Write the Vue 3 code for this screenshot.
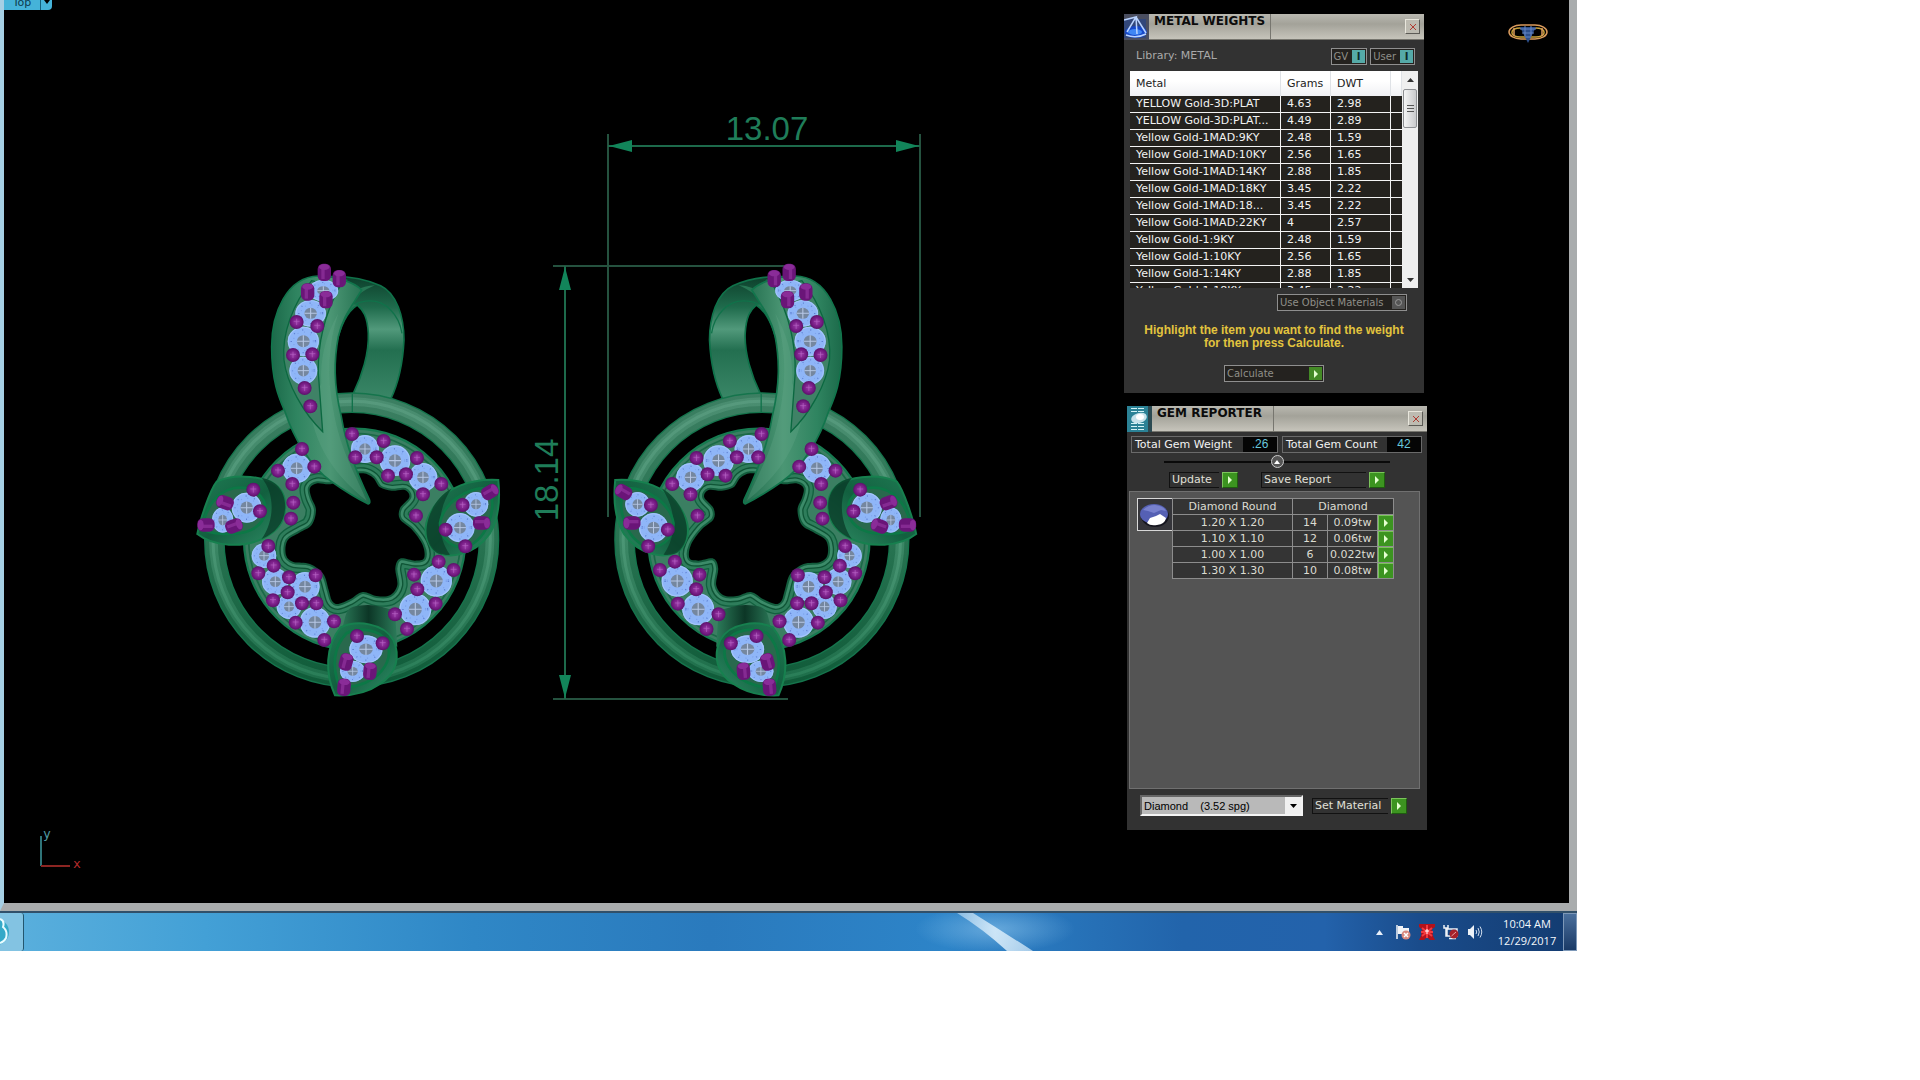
<template>
  <div class="desktop">
    <main class="viewport">
      <svg class="scene" viewBox="4 0 1565 903" role="img" aria-label="Top view of the earring pair">
        <defs>
          <linearGradient id="leafFill" x1="0" y1="0" x2="1" y2="0">
            <stop offset="0" stop-color="#1c6a4a" />
            <stop offset="0.25" stop-color="#2f8460" />
            <stop offset="0.6" stop-color="#4b9674" />
            <stop offset="1" stop-color="#1f6b4b" />
          </linearGradient>
          <linearGradient id="bandFill" x1="0" y1="0" x2="0" y2="1">
            <stop offset="0" stop-color="#0d3f2b" />
            <stop offset="0.25" stop-color="#1f6b4c" />
            <stop offset="0.43" stop-color="#51997b" />
            <stop offset="0.6" stop-color="#236f50" />
            <stop offset="1" stop-color="#3a8767" />
          </linearGradient>
          <linearGradient id="stemFill" x1="0" y1="0" x2="1" y2="0">
            <stop offset="0" stop-color="#2c7c5a" />
            <stop offset="0.5" stop-color="#0c3626" />
            <stop offset="1" stop-color="#2c7c5a" />
          </linearGradient>
          <linearGradient id="cupFill" x1="0" y1="0" x2="1" y2="1">
            <stop offset="0" stop-color="#1f7a53" />
            <stop offset="0.5" stop-color="#12603f" />
            <stop offset="1" stop-color="#2f8d66" />
          </linearGradient>
          <radialGradient id="prongFill">
            <stop offset="0" stop-color="#9a3ca8" />
            <stop offset="0.7" stop-color="#741a82" />
            <stop offset="1" stop-color="#5a1268" />
          </radialGradient>
          <linearGradient id="ringFill" gradientUnits="userSpaceOnUse" x1="0" y1="430" x2="0" y2="1310">
            <stop offset="0" stop-color="#3c7f62" />
            <stop offset="0.5" stop-color="#287452" />
            <stop offset="1" stop-color="#0f5a38" />
          </linearGradient>
          <linearGradient id="ringShine" gradientUnits="userSpaceOnUse" x1="0" y1="430" x2="0" y2="1310">
            <stop offset="0" stop-color="#5a9c80" />
            <stop offset="0.5" stop-color="#4f9a79" />
            <stop offset="1" stop-color="#2a8059" />
          </linearGradient>
          <g id="gem">
            <circle r="44" fill="#8fb6f8" />
            <circle r="42" fill="none" stroke="#a6c6fc" stroke-width="3" />
            <circle r="34" fill="none" stroke="#5f80d2" stroke-width="4" stroke-dasharray="3 23" />
            <circle r="28" fill="none" stroke="#7c9fe8" stroke-width="3" stroke-dasharray="3 16" />
            <circle r="18" fill="#75879f" />
            <path d="M-18 0H18M0-18V18" stroke="#b7c8e6" stroke-width="3" />
          </g>
          <g id="pendant" transform="translate(180 250) scale(0.3333)">
            <path class="band" d="M440 80C520 76 575 95 602 107C650 130 672 200 672 270C668 350 655 400 632 448L520 430C545 380 568 310 565 250C562 200 550 180 532 165C500 185 480 230 467 290L420 250Z" />
            <path class="edge" d="M490 192C520 150 590 135 632 180C652 200 662 225 666 250M500 88C500 110 440 130 430 180" />
            <path d="M532 165C505 170 470 230 467 290L440 260C450 180 500 110 585 106C550 120 520 145 505 160Z" fill="#287654" />
            <circle class="disc" cx="524" cy="868" r="332" />
            <circle class="disc-line" cx="524" cy="868" r="318" />
            <circle cx="515" cy="870" r="412" fill="none" stroke="#15744c" stroke-width="62" />
            <circle cx="515" cy="870" r="412" fill="none" stroke="url(#ringFill)" stroke-width="54" />
            <circle cx="515" cy="870" r="415" fill="none" stroke="url(#ringShine)" stroke-opacity="0.5" stroke-width="26" />
            <circle cx="515" cy="870" r="416" fill="none" stroke="url(#ringShine)" stroke-opacity="0.8" stroke-width="9" />
            <path class="edge" d="M517 432V486" />
            <g class="rim">
              <path :d="holePath" stroke="#12613f" stroke-width="62" />
              <path :d="holePath" stroke="#2e7d5b" stroke-width="54" />
              <path :d="holePath" stroke="#0f5536" stroke-width="36" />
              <path :d="holePath" stroke="#3c8b69" stroke-width="28" />
              <path :d="holePath" stroke="#135d3d" stroke-width="12" />
            </g>
            <path :d="holePath" fill="#000" />

            <path class="leaf" d="M415 78C320 80 275 190 275 290C275 400 300 450 315 485C340 560 390 650 452 693C490 720 530 745 565 762Q572 760 568 748C540 690 500 600 484 500C460 400 462 330 475 260C488 200 515 170 545 120C520 95 470 80 415 78Z" />
            <path d="M390 480C410 600 470 680 560 752C530 680 480 600 460 480C440 380 445 280 475 190C435 260 420 330 424 400Z" fill="#67aa8b" fill-opacity="0.3" />
            <path class="pocket" d="M395 92C340 160 305 250 312 330C320 400 370 490 428 545L415 370C413 280 430 200 478 112Z" />

            <path class="cup" d="M52 852C60 810 90 720 110 695C160 672 230 678 272 695C308 715 316 740 316 770C314 820 290 845 250 865C190 895 100 890 52 852Z" />
            <path d="M245 684C285 690 316 720 316 770C314 820 285 850 245 867C285 810 285 730 245 684Z" fill="#0a3a27" fill-opacity="0.75" />
            <path class="cup-inner" d="M62 835C80 780 100 730 160 715C220 705 257 740 257 780C250 840 190 855 130 852C100 850 75 845 62 835Z" />

            <path class="cup" d="M955 690C870 685 800 715 770 760C730 810 725 860 760 900C800 930 880 920 930 850C960 800 960 740 955 690Z" />
            <path d="M815 715C740 760 720 860 760 900C775 915 795 916 810 914C770 860 770 780 815 715Z" fill="#0a3a27" fill-opacity="0.7" />
            <path class="cup-inner" d="M928 715C860 710 790 760 780 820C780 870 820 895 860 892C930 860 950 770 928 715Z" />

            <path d="M480 1150C500 1110 490 1080 520 1070Q585 1055 645 1085L652 1190Z" fill="url(#stemFill)" />
            <path class="cup" d="M465 1336C435 1270 435 1190 482 1132C530 1110 610 1118 640 1170C662 1220 650 1270 600 1302C560 1330 510 1338 465 1336Z" />
            <path class="cup-inner" d="M478 1310C455 1250 460 1190 500 1150C540 1130 600 1138 620 1175C640 1220 615 1260 580 1285C550 1305 510 1315 478 1310Z" />

            <use
              v-for="(g, i) in gems"
              :key="'g' + i"
              href="#gem"
              :transform="`translate(${g[0]} ${g[1]}) scale(${g[2] / 44} ${(g[3] || g[2]) / 44})`"
            />
            <g v-for="(p, i) in posts" :key="'c' + i" :transform="`translate(${p[0]} ${p[1]}) rotate(${p[2]})`">
              <rect x="-20" y="-26" width="40" height="52" rx="16" fill="#6a1578" />
              <rect x="-9" y="-22" width="10" height="42" fill="#9a3ca8" fill-opacity="0.55" />
              <ellipse cy="-16" rx="16" ry="9" fill="#8a2c98" />
            </g>
            <g v-for="(b, i) in balls" :key="'b' + i" :transform="`translate(${b[0]} ${b[1]})`">
              <circle r="21" fill="url(#prongFill)" />
              <path d="M-9 -2H9M0 -10V9" stroke="#b765c4" stroke-opacity="0.6" stroke-width="3" />
            </g>
          </g>
        </defs>

        <use href="#pendant" />
        <g class="dims">
          <path d="M608 134V517M920 134V517M553 266H785M553 699H788" stroke="#25523f" />
          <path d="M608 146H920M565 266V699" stroke="#1d6a4b" />
          <path d="M609 146l23-6v12zM919 146l-23-6v12zM565 267l-6 23h12zM565 698l-6-23h12z" fill="#12855a" stroke="none" />
          <text x="767" y="140">13.07</text>
          <text transform="translate(558 480) rotate(-90)">18.14</text>
        </g>
        <use href="#pendant" transform="translate(1113.5 0) scale(-1 1)" />

        <g class="axes">
          <path d="M41 836V866" stroke="#2f7478" />
          <path d="M41 866H70" stroke="#8c2522" />
          <text x="43" y="838" fill="#4f9aa2">y</text>
          <text x="73" y="868" fill="#b52c2c">x</text>
        </g>

        <g fill="none">
          <rect x="1509" y="25" width="38" height="14" rx="12" ry="7" stroke="#d99a5c" stroke-width="1.5" />
          <rect x="1512" y="28" width="32" height="9" rx="8" ry="4" stroke="#c9a23a" stroke-width="1.5" />
          <path d="M1514 28V36M1542 28V36" stroke="#d99a5c" stroke-width="1.5" />
          <path d="M1520 27H1536L1528 43Z" fill="#2c4f8c" />
          <path d="M1520 29H1536M1522 33H1534M1525 37H1531M1525 26V36M1531 26V36" stroke="#6486c4" />
        </g>
      </svg>

      <div class="view-tab">
        <button type="button" class="view-name">Top</button>
        <button type="button" class="view-menu" aria-label="Viewport menu">
          <svg width="6" height="4" viewBox="0 0 6 4"><path d="M0 0H6L3 4Z" /></svg>
        </button>
      </div>

      <section class="palette weights">
        <header class="title-bar">
          <svg class="title-icon" width="25" height="26" viewBox="0 0 25 26">
            <rect width="25" height="26" fill="#4a4e60" />
            <rect y="5" width="22" height="19" fill="#23438c" fill-opacity="0.6" />
            <ellipse cx="12" cy="18" rx="11" ry="6" fill="#1648c8" />
            <ellipse cx="11" cy="18" rx="7" ry="3" fill="#3f86f4" />
            <path d="M0 6L12 3L3 18M12 3L22 19M12 3L13 20M2 21Q12 25 22 20" fill="none" stroke="#b9d3ff" stroke-width="1.5" />
          </svg>
          <h2>METAL WEIGHTS</h2>
          <button type="button" class="close" aria-label="Close">
            <svg width="8" height="8" viewBox="0 0 8 8"><path d="M1 1L7 7M7 1L1 7" stroke="#b03a30" /></svg>
          </button>
        </header>
        <div class="library">
          <span class="library-name">Library: METAL</span>
          <button type="button" class="toggle">GV<b>I</b></button>
          <button type="button" class="toggle">User<b>I</b></button>
        </div>
        <div class="list">
          <table>
            <colgroup>
              <col class="c-metal" />
              <col class="c-grams" />
              <col class="c-dwt" />
              <col />
            </colgroup>
            <thead>
              <tr><th>Metal</th><th>Grams</th><th>DWT</th><th></th></tr>
            </thead>
            <tbody>
              <tr v-for="m in metals" :key="m[0]">
                <td>{{ m[0] }}</td>
                <td>{{ m[1] }}</td>
                <td>{{ m[2] }}</td>
                <td></td>
              </tr>
            </tbody>
          </table>
          <div class="scrollbar">
            <svg width="7" height="4" viewBox="0 0 7 4"><path d="M0 4L3.5 0L7 4Z" fill="#333" /></svg>
            <div class="thumb"><i></i><i></i><i></i></div>
            <svg class="down" width="7" height="4" viewBox="0 0 7 4"><path d="M0 0L3.5 4L7 0Z" fill="#333" /></svg>
          </div>
        </div>
        <button type="button" class="toggle object-materials">Use Object Materials<b class="off"><i></i></b></button>
        <p class="hint">Highlight the item you want to find the weight<br />for then press Calculate.</p>
        <button type="button" class="toggle calculate">
          Calculate
          <b class="run"><svg width="4" height="8" viewBox="0 0 4 8"><path d="M0 0L4 4L0 8Z" /></svg></b>
        </button>
      </section>

      <section class="palette reporter">
        <header class="title-bar">
          <svg class="title-icon" width="25" height="26" viewBox="0 0 25 26">
            <rect width="25" height="26" fill="#2c4a52" />
            <rect width="21" height="26" fill="#2b8296" />
            <path d="M4 2.5H17M4 5.5H17M4 17.5H17M4 20.5H17M4 23.5H17" stroke="#d3f3f6" stroke-dasharray="6 1" />
            <ellipse cx="12" cy="12" rx="8" ry="5" fill="#c6e2ea" transform="rotate(-15 12 12)" />
            <ellipse cx="13" cy="11" rx="4" ry="3" fill="#fff" />
          </svg>
          <h2>GEM REPORTER</h2>
          <button type="button" class="close" aria-label="Close">
            <svg width="8" height="8" viewBox="0 0 8 8"><path d="M1 1L7 7M7 1L1 7" stroke="#b03a30" /></svg>
          </button>
        </header>
        <div class="totals">
          <div class="total grow"><span>Total Gem Weight</span><output>.26</output></div>
          <div class="total count"><span>Total Gem Count</span><output>42</output></div>
        </div>
        <div class="fold">
          <button type="button" aria-label="Collapse">
            <svg width="6" height="4" viewBox="0 0 6 4"><path d="M0 4L3 0L6 4Z" fill="#fff" /></svg>
          </button>
        </div>
        <div class="actions">
          <button type="button" class="action"><span class="update">Update</span><Go /></button>
          <button type="button" class="action"><span class="save">Save Report</span><Go /></button>
        </div>
        <div class="report">
          <svg class="stone" width="36" height="33" viewBox="0 0 36 33">
            <rect x="0.5" y="0.5" width="35" height="32" fill="#35353a" stroke="#d8d8d8" />
            <ellipse cx="18" cy="18" rx="14" ry="11" fill="#15151f" />
            <ellipse cx="17" cy="16" rx="14" ry="10" fill="#5560b4" />
            <path d="M6 12Q11 7 18 7Q27 8 29 13L24 12L17 15L11 13Z" fill="#7881cf" />
            <path d="M10 25L13 20L19 18L23 16L29 20Q28 26 20 27Q13 28 10 25Z" fill="#fff" />
          </svg>
          <table>
            <colgroup>
              <col class="c-size" />
              <col class="c-count" />
              <col class="c-weight" />
              <col />
            </colgroup>
            <thead>
              <tr><th>Diamond Round</th><th colspan="3">Diamond</th></tr>
            </thead>
            <tbody>
              <tr v-for="s in stones" :key="s.size">
                <td>{{ s.size }}</td>
                <td>{{ s.count }}</td>
                <td>{{ s.weight }}</td>
                <td class="go-cell"><button type="button" :aria-label="'Select ' + s.size"><Go /></button></td>
              </tr>
            </tbody>
          </table>
        </div>
        <div class="material">
          <label class="picker">
            <select v-model="material" aria-label="Material">
              <option v-for="m in materials" :key="m" :value="m">{{ m }}</option>
            </select>
            <span class="arrow"><svg width="7" height="4" viewBox="0 0 7 4"><path d="M0 0H7L3.5 4Z" /></svg></span>
          </label>
          <button type="button" class="action"><span class="set">Set Material</span><Go /></button>
        </div>
      </section>
    </main>

    <footer class="taskbar">
      <button type="button" class="task" aria-label="Rhino">
        <svg width="23" height="38" viewBox="0 0 23 38">
          <circle cx="-4" cy="19" r="13" fill="#35a9c8" />
          <path d="M0 6Q5 8 3 14Q8 18 6 25Q4 29 0 30" fill="none" stroke="#e9fbff" stroke-width="2" />
        </svg>
      </button>
      <svg class="streak" width="180" height="38" viewBox="0 0 180 38">
        <defs>
          <radialGradient id="glow">
            <stop offset="0" stop-color="#8cc4ec" stop-opacity="0.6" />
            <stop offset="1" stop-color="#8cc4ec" stop-opacity="0" />
          </radialGradient>
          <linearGradient id="beam">
            <stop offset="0" stop-color="#d8ecfa" stop-opacity="0.5" />
            <stop offset="0.5" stop-color="#d8ecfa" stop-opacity="0.9" />
            <stop offset="1" stop-color="#d8ecfa" stop-opacity="0.7" />
          </linearGradient>
        </defs>
        <ellipse cx="80" cy="16" rx="80" ry="24" fill="url(#glow)" />
        <path d="M42 0H58Q90 20 118 38H92Q68 16 42 0Z" fill="url(#beam)" />
      </svg>
      <div class="tray">
        <svg width="7" height="5" viewBox="0 0 7 5"><path d="M0 5L3.5 0L7 5Z" fill="#e8f0fa" /></svg>
        <svg width="16" height="16" viewBox="0 0 16 16">
          <path d="M2 1V15" stroke="#f2f4f7" stroke-width="1.5" />
          <path d="M3 2H8V4H14V10H3Z" fill="#f2f4f7" />
          <circle cx="11" cy="11" r="4.5" fill="#d8887e" />
          <path d="M9 9L13 13M13 9L9 13" stroke="#fff" stroke-width="1.5" />
        </svg>
        <svg width="16" height="16" viewBox="0 0 16 16">
          <path d="M0 0H16V3L13 5L14 12L16 16H11L8 13L5 16H0L2 12L3 5L0 3Z" fill="#b3121b" />
          <path d="M8 1V14M3 4L13 12M13 4L3 12M2 8H14" stroke="#f23b40" stroke-width="2" />
          <path d="M8 5V10M6 7H10" stroke="#fff" />
        </svg>
        <svg width="16" height="16" viewBox="0 0 16 16">
          <path d="M4 5H14V12H4ZM6 14.5H13M1 1V4H5V1M3 4V12H4" fill="none" stroke="#eef2f7" stroke-width="1.5" />
          <circle cx="11" cy="10" r="4.5" fill="#a5202a" />
          <path d="M8.5 12L13 8" stroke="#e8a0a0" />
        </svg>
        <svg width="16" height="16" viewBox="0 0 16 16">
          <path d="M1 5H3L7 1V15L3 11H1Z" fill="#eef2f7" />
          <path d="M9 6Q10.5 8 9 10M11 4Q13.5 8 11 12M13 2.5Q16.5 8 13 13.5" fill="none" stroke="#cfdced" />
        </svg>
        <time class="clock"><span>10:04 AM</span><span>12/29/2017</span></time>
      </div>
      <button type="button" class="show-desktop" aria-label="Show desktop"></button>
    </footer>
  </div>
</template>

<script setup>
import { ref, h } from 'vue'

// Green arrow used on every action in the reporter
const Go = () =>
  h('i', { class: 'go' }, [
    h('svg', { width: 4, height: 8, viewBox: '0 0 4 8' }, [h('path', { d: 'M0 0L4 4L0 8Z', fill: '#e4ffd0' })])
  ])

const metals = [
  ['YELLOW Gold-3D:PLAT', '4.63', '2.98'],
  ['YELLOW Gold-3D:PLAT...', '4.49', '2.89'],
  ['Yellow Gold-1MAD:9KY', '2.48', '1.59'],
  ['Yellow Gold-1MAD:10KY', '2.56', '1.65'],
  ['Yellow Gold-1MAD:14KY', '2.88', '1.85'],
  ['Yellow Gold-1MAD:18KY', '3.45', '2.22'],
  ['Yellow Gold-1MAD:18...', '3.45', '2.22'],
  ['Yellow Gold-1MAD:22KY', '4', '2.57'],
  ['Yellow Gold-1:9KY', '2.48', '1.59'],
  ['Yellow Gold-1:10KY', '2.56', '1.65'],
  ['Yellow Gold-1:14KY', '2.88', '1.85'],
  ['Yellow Gold-1:18KY', '3.45', '2.22']
]

const stones = [
  { size: '1.20 X 1.20', count: 14, weight: '0.09tw' },
  { size: '1.10 X 1.10', count: 12, weight: '0.06tw' },
  { size: '1.00 X 1.00', count: 6, weight: '0.022tw' },
  { size: '1.30 X 1.30', count: 10, weight: '0.08tw' }
]

const materials = ['Diamond\u00a0\u00a0\u00a0\u00a0(3.52 spg)']
const material = ref(materials[0])

// x, y, rx, ry
const gems = [
  [430, 122, 45, 32], [392, 190, 46, 40], [370, 274, 47, 44], [370, 362, 42],
  [555, 597, 42], [645, 632, 46], [729, 682, 43], [350, 655, 44],
  [252, 917, 37], [286, 995, 40], [375, 1010, 44], [327, 1070, 37], [405, 1117, 46],
  [769, 993, 47], [706, 1078, 48],
  [128, 810, 32, 38], [200, 773, 45],
  [888, 763, 37], [840, 833, 44],
  [518, 1264, 38, 32], [558, 1198, 50, 42]
]

// x, y, rotation
const posts = [
  [433, 67, 0], [478, 86, 0], [383, 126, 0], [438, 149, 0],
  [135, 758, -70], [78, 825, -90], [162, 828, 70],
  [930, 726, 60], [905, 819, 90], [498, 1236, 15], [570, 1264, 5], [492, 1312, 5]
]

const balls = [
  [350, 216], [412, 228], [339, 315], [397, 313], [374, 414], [391, 469],
  [516, 552], [611, 573], [526, 622], [590, 622], [711, 624], [624, 677], [678, 673], [784, 702],
  [366, 597], [403, 650], [294, 662], [337, 702], [729, 733], [708, 797], [340, 758], [333, 806],
  [265, 888], [281, 947], [235, 970], [327, 982], [407, 976], [323, 1027], [279, 1051],
  [366, 1060], [409, 1060], [347, 1118], [462, 1114], [433, 1170],
  [776, 935], [821, 960], [702, 974], [712, 1018], [767, 1061], [645, 1093], [681, 1137],
  [220, 719], [240, 784], [848, 765], [797, 839], [856, 889], [531, 1158], [608, 1180]
]

// Wavy opening in the middle of the wreath
const hole = [
  [455, 702], [505, 676], [550, 670], [580, 684], [600, 712], [635, 722], [675, 720], [688, 742],
  [660, 775], [660, 808], [695, 838], [728, 885], [732, 925], [705, 932], [660, 926], [646, 955],
  [652, 1005], [630, 1036], [590, 1038], [548, 1026], [510, 1048], [475, 1062], [456, 1052],
  [446, 1020], [430, 972], [390, 942], [340, 936], [318, 915], [322, 872], [358, 848],
  [395, 825], [408, 780], [394, 742], [390, 714], [412, 700]
]

const smooth = (pts) => {
  const n = pts.length
  const at = (i) => pts[(i + n) % n]
  let d = `M${pts[0]}`
  for (let i = 0; i < n; i++) {
    const [a, b, c, e] = [at(i - 1), at(i), at(i + 1), at(i + 2)]
    d += `C${b[0] + (c[0] - a[0]) / 6} ${b[1] + (c[1] - a[1]) / 6} `
    d += `${c[0] - (e[0] - b[0]) / 6} ${c[1] - (e[1] - b[1]) / 6} ${c[0]} ${c[1]}`
  }
  return d + 'Z'
}
const holePath = smooth(hole)
</script>

<style>
body {
  background: #fff;
}

.go {
  display: flex;
  flex: none;
  align-items: center;
  justify-content: center;
  box-sizing: border-box;
  width: 16px;
  height: 16px;
  background: #3c9420;
  border: 1px solid;
  border-color: #7cc45c #1f5c10 #1f5c10 #7cc45c;
}
</style>

<style scoped>
.desktop {
  margin-right: 343px;
  font-family: "DejaVu Sans", sans-serif;
  font-size: 11px;
}

button {
  margin: 0;
  padding: 0;
  border: 0;
  background: none;
  color: inherit;
  font: inherit;
}

svg {
  display: block;
}

.viewport {
  position: relative;
  background: #000;
  border: solid #a9acad;
  border-width: 0 8px 8px 0;
  border-left: 4px solid #a5cfe4;
}

.scene {
  width: 100%;
}

.band {
  fill: url(#bandFill);
  stroke: #10724a;
  stroke-width: 5;
}

.edge {
  fill: none;
  stroke: #10724a;
  stroke-width: 4;
}

.disc {
  fill: #3b7f62;
  stroke: #177a50;
  stroke-width: 7;
}

.disc-line {
  fill: none;
  stroke: #1b6a48;
  stroke-width: 5;
}

.rim {
  fill: none;
  stroke-linejoin: round;
}

.leaf {
  fill: url(#leafFill);
  stroke: #12754c;
  stroke-width: 5;
}

.pocket {
  fill: #3f8266;
  stroke: #0b6840;
  stroke-width: 4;
}

.cup {
  fill: url(#cupFill);
  stroke: #17804f;
  stroke-width: 6;
}

.cup-inner {
  fill: #29694d;
  stroke: #0c7846;
  stroke-width: 8;
}

.dims text {
  fill: #1f7d59;
  font: 33px "Liberation Sans", Arial, sans-serif;
  text-anchor: middle;
}

.dims path,
.axes path {
  stroke-width: 2;
}

.axes text {
  font: 13px "DejaVu Sans Mono", monospace;
}

.view-tab {
  position: absolute;
  top: 0;
  left: 0;
  display: flex;
  height: 10px;
  overflow: hidden;
  background: #45b3d9;
  border-radius: 0 0 4px 0;
  color: #0c3c50;
}

.view-name {
  width: 37px;
  line-height: 12px;
  margin-top: -5px;
  border-right: 1px solid #14607c;
}

.view-menu {
  display: flex;
  justify-content: center;
  width: 11px;
}

.palette {
  position: absolute;
  width: 300px;
  background: #323232;
  color: #f2f2f2;
}

.weights {
  top: 14px;
  right: 145px;
  padding-bottom: 11px;
}

.reporter {
  top: 406px;
  right: 142px;
  padding-bottom: 14px;
}

.title-bar {
  display: flex;
  align-items: center;
  box-sizing: border-box;
  height: 26px;
  padding-right: 4px;
  background: linear-gradient(#b9b8b0, #a3a299 40%, #c6c4bb);
  border-bottom: 1px solid #77766f;
}

.title-bar h2 {
  flex: none;
  align-self: stretch;
  box-sizing: border-box;
  width: 122px;
  margin: 0;
  padding-left: 5px;
  border-right: 1px solid #77766f;
  color: #0c0c0c;
  font-size: 12px;
  line-height: 14px;
  white-space: nowrap;
}

.close {
  display: flex;
  align-items: center;
  justify-content: center;
  box-sizing: border-box;
  width: 15px;
  height: 15px;
  margin-left: auto;
  background: #bdbbb1;
  border: 1px solid;
  border-color: #e8e6dc #5c5b56 #5c5b56 #e8e6dc;
}

.library {
  display: flex;
  gap: 3px;
  padding: 8px 9px 6px 12px;
}

.library-name {
  flex: 1;
  color: #a9a9a9;
  line-height: 16px;
}

.toggle {
  display: flex;
  align-items: center;
  justify-content: space-between;
  gap: 4px;
  box-sizing: border-box;
  height: 17px;
  padding: 0 1px 0 2px;
  background: #24221f;
  border: 1px solid #8f8f8f;
  color: #8f8f88;
  font-size: 10px;
}

.toggle b {
  display: flex;
  align-items: center;
  justify-content: center;
  width: 13px;
  height: 13px;
  background: #55aaa8;
  color: #0b2a2a;
}

.toggle b.off {
  background: #555;
}

.toggle b.off i {
  width: 5px;
  height: 5px;
  border: 1px solid #999;
  border-radius: 50%;
}

.toggle b.run {
  background: #448a26;
}

.run path {
  fill: #e4ffd0;
}

.list {
  display: flex;
  align-items: flex-start;
  height: 217px;
  margin: 0 6px;
  overflow: hidden;
}

.list table {
  flex: 1;
  table-layout: fixed;
  border-collapse: separate;
  border-spacing: 0;
}

.c-metal {
  width: 151px;
}

.c-grams {
  width: 50px;
}

.c-dwt {
  width: 60px;
}

.list th {
  box-sizing: border-box;
  height: 25px;
  padding: 0 0 0 6px;
  background: linear-gradient(#fff 40%, #f0f1f4);
  border-right: 1px solid #dfe2e6;
  color: #222;
  font-weight: normal;
  text-align: left;
}

.list td {
  box-sizing: border-box;
  height: 17px;
  padding: 0 0 0 6px;
  background: #24221e;
  border: solid #f4f4f4;
  border-width: 0 1px 1px 0;
  line-height: 16px;
  white-space: nowrap;
}

.list td:last-child {
  border-right: 0;
}

.scrollbar {
  display: flex;
  flex-direction: column;
  align-items: center;
  align-self: stretch;
  width: 16px;
  padding: 7px 0 6px;
  box-sizing: border-box;
  background: #efefef;
}

.thumb {
  display: flex;
  flex-direction: column;
  align-items: center;
  justify-content: center;
  gap: 2px;
  box-sizing: border-box;
  width: 14px;
  height: 39px;
  margin-top: 7px;
  background: linear-gradient(90deg, #f5f5f5, #c9cacc);
  border: 1px solid #8e9093;
  border-radius: 2px;
}

.thumb i {
  width: 7px;
  height: 1px;
  background: #555;
}

.down {
  margin-top: auto;
}

.object-materials {
  width: 130px;
  margin: 6px 17px 0 auto;
}

.hint {
  margin: 13px 0 15px;
  color: #e2c43e;
  font: bold 12px/13px "Liberation Sans", Arial, sans-serif;
  text-align: center;
}

.calculate {
  width: 100px;
  margin: 0 auto;
}

.totals {
  display: flex;
  gap: 4px;
  padding: 4px 5px 0 4px;
}

.total {
  display: flex;
  box-sizing: border-box;
  height: 17px;
  border: 1px solid #6a6a6a;
  line-height: 15px;
  white-space: nowrap;
}

.total span {
  flex: 1;
  padding: 0 3px;
}

.total output {
  width: 34px;
  background: #050505;
  color: #69c8dc;
  font-family: "Liberation Sans", Arial, sans-serif;
  font-size: 12px;
  text-align: center;
}

.grow {
  flex: 1;
}

.count {
  width: 140px;
}

.fold {
  display: flex;
  justify-content: center;
  margin: 2px 37px 4px;
  background: linear-gradient(#0a0a0a, #0a0a0a) center / 100% 2px no-repeat;
}

.fold button {
  display: flex;
  align-items: center;
  justify-content: center;
  box-sizing: border-box;
  width: 13px;
  height: 13px;
  background: #555;
  border: 1px solid #ccc;
  border-radius: 50%;
}

.actions {
  display: flex;
  gap: 23px;
  padding: 0 42px;
}

.action {
  display: flex;
  gap: 3px;
  align-items: center;
}

.action span {
  box-sizing: border-box;
  height: 16px;
  padding-left: 2px;
  border: solid #111;
  border-width: 1px 0 1px 1px;
  color: #e0e0d8;
  line-height: 14px;
  text-align: left;
  white-space: nowrap;
}

.update {
  width: 50px;
}

.save {
  width: 105px;
}

.set {
  width: 76px;
}

.report {
  display: flex;
  align-items: flex-start;
  box-sizing: border-box;
  min-height: 298px;
  margin: 3px 7px 6px 2px;
  padding: 6px 0 0 7px;
  background: #545454;
  border: 1px solid #707070;
}

.stone {
  flex: none;
}

.report table {
  width: 222px;
  margin-left: -1px;
  table-layout: fixed;
  border-collapse: collapse;
  background: #343434;
}

.c-size {
  width: 120px;
}

.c-count {
  width: 35px;
}

.c-weight {
  width: 50px;
}

.report th,
.report td {
  height: 15px;
  padding: 0;
  border: 1px solid #8d8d8d;
  color: #dcdcd2;
  font-weight: normal;
  line-height: 15px;
  text-align: center;
  white-space: nowrap;
}

.report .go-cell {
  line-height: 0;
}

.go-cell button {
  display: block;
  height: 15px;
  overflow: hidden;
}

.material {
  display: flex;
  align-items: center;
  gap: 9px;
  padding-left: 13px;
}

.picker {
  position: relative;
  flex: none;
}

.picker select {
  display: block;
  box-sizing: border-box;
  width: 163px;
  height: 21px;
  padding: 0 0 0 2px;
  appearance: none;
  background: #b9b9b9;
  border: 2px solid;
  border-color: #666 #f4f4f4 #f4f4f4 #666;
  border-radius: 0;
  color: #000;
  font: 11px "Liberation Sans", Arial, sans-serif;
}

.arrow {
  position: absolute;
  top: 2px;
  right: 2px;
  display: flex;
  align-items: center;
  justify-content: center;
  width: 16px;
  height: 17px;
  background: #f0f0f0;
  pointer-events: none;
}

.taskbar {
  position: relative;
  display: flex;
  align-items: center;
  box-sizing: border-box;
  height: 40px;
  background: linear-gradient(90deg, #5bb0dd, #43a0d6 13%, #2f87c6 30%, #2a7abd 45%, #2d84c8 60%, #2264ab 75%, #2362ab 84%, #1a4c8b 90%, #133b70);
  border-top: 2px solid #31506a;
  color: #f4f8fc;
}

.task {
  width: 24px;
  height: 38px;
  box-sizing: border-box;
  background: #83c3e2;
  border-right: 1px solid #23566f;
  border-radius: 0 3px 3px 0;
}

.streak {
  position: absolute;
  top: 0;
  left: 58%;
}

.tray {
  display: flex;
  align-items: center;
  gap: 8px;
  margin-left: auto;
}

.tray svg:first-child {
  margin-right: 4px;
}

.clock {
  display: flex;
  flex-direction: column;
  width: 72px;
  font: 11px/17px "Open Sans", sans-serif;
  text-align: center;
}

.show-desktop {
  box-sizing: border-box;
  width: 14px;
  height: 38px;
  background: linear-gradient(#4a6f9c, #1a3a66);
  border: 1px solid #7d98b8;
}
</style>
